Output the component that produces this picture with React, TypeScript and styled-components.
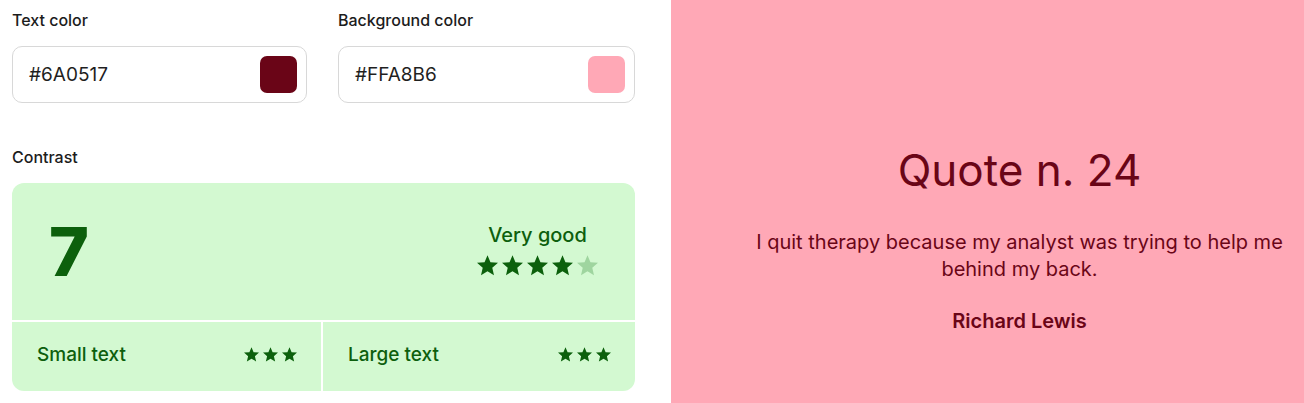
import React from "react";
import styled, { createGlobalStyle } from "styled-components";

const Global = createGlobalStyle`
  html, body { margin: 0; padding: 0; }
  body { font-family: Inter, "Noto Sans", sans-serif; background: #fff; }
`;

const Page = styled.div`
  display: flex;
  width: 1304px;
  height: 403px;
  overflow: hidden;
`;

const Controls = styled.div`
  width: 671px;
  box-sizing: border-box;
  padding: 10px 36px 0 12px;
  display: flex;
  flex-direction: column;
`;

const FieldRow = styled.div`
  display: grid;
  grid-template-columns: 295px 297px;
  column-gap: 31px;
`;

const Field = styled.div`
  display: flex;
  flex-direction: column;
`;

const Label = styled.div`
  font-size: 16px;
  line-height: 20px;
  font-weight: 500;
  color: #1c1c1c;
  margin-bottom: 16px;
`;

const InputBox = styled.div`
  height: 57px;
  box-sizing: border-box;
  border: 1px solid #d8d8d8;
  border-radius: 10px;
  display: flex;
  align-items: center;
  justify-content: space-between;
  padding: 0 9px 0 16px;
  font-size: 19px;
  color: #1f1f1f;
`;

const Swatch = styled.div<{ $c: string }>`
  width: 37px;
  height: 37px;
  border-radius: 7px;
  background: ${(p) => p.$c};
`;

const ContrastSection = styled.div`
  margin-top: 44px;
  display: flex;
  flex-direction: column;
`;

const Card = styled.div`
  display: grid;
  grid-template-columns: 309px 1fr;
  grid-template-rows: 137px 69px;
  gap: 2px;
  border-radius: 12px;
  overflow: hidden;
  color: #0d5f0d;
`;

const Cell = styled.div`
  background: #d3f9d1;
`;

const TopCell = styled(Cell)`
  grid-column: 1 / 3;
  display: flex;
  align-items: center;
  justify-content: space-between;
  padding: 0 37px 0 37px;
`;

const Score = styled.div`
  font-size: 68px;
  line-height: 68px;
  font-weight: 800;
  color: #0c600c;
  margin-top: -1px;
`;

const Verdict = styled.div`
  display: flex;
  flex-direction: column;
  align-items: center;
  gap: 8px;
  margin-top: -4px;
`;

const VerdictText = styled.div`
  font-size: 20px;
  line-height: 24px;
  font-weight: 500;
`;

const Stars = styled.div<{ $gap: number }>`
  display: flex;
  gap: ${(p) => p.$gap}px;
`;

const BottomCell = styled(Cell)`
  display: flex;
  align-items: center;
  justify-content: space-between;
  padding: 0 24px 4px 25px;
  font-size: 19px;
  font-weight: 500;
`;

const Preview = styled.div`
  flex: 1;
  background: #ffa8b6;
  color: #6a0517;
  display: flex;
  flex-direction: column;
  align-items: center;
  text-align: center;
  padding: 143px 16px 0 80px;
`;

const Title = styled.div`
  font-size: 44px;
  line-height: 54px;
  font-weight: 400;
`;

const QuoteText = styled.div`
  margin-top: 32px;
  font-size: 20px;
  line-height: 27px;
`;

const Author = styled.div`
  margin-top: 26px;
  font-size: 20px;
  line-height: 24px;
  font-weight: 600;
`;

const Star = ({ size, on }: { size: number; on: boolean }) => (
  <svg width={size} height={size} viewBox="2 2 20 19.5">
    <path
      fill={on ? "#0c600c" : "#9fd59f"}
      d="M12 17.27L18.18 21l-1.64-7.03L22 9.24l-7.19-.61L12 2 9.19 8.63 2 9.24l5.46 4.73L5.82 21z"
    />
  </svg>
);

const StarRow = ({ n, total, size, gap }: { n: number; total: number; size: number; gap: number }) => (
  <Stars $gap={gap}>
    {Array.from({ length: total }).map((_, i) => (
      <Star key={i} size={size} on={i < n} />
    ))}
  </Stars>
);

export default function App() {
  return (
    <>
      <Global />
      <Page>
        <Controls>
          <FieldRow>
            <Field>
              <Label>Text color</Label>
              <InputBox>
                #6A0517
                <Swatch $c="#6A0517" />
              </InputBox>
            </Field>
            <Field>
              <Label>Background color</Label>
              <InputBox>
                #FFA8B6
                <Swatch $c="#FFA8B6" />
              </InputBox>
            </Field>
          </FieldRow>
          <ContrastSection>
            <Label>Contrast</Label>
            <Card>
              <TopCell>
                <Score>7</Score>
                <Verdict>
                  <VerdictText>Very good</VerdictText>
                  <StarRow n={4} total={5} size={21} gap={4} />
                </Verdict>
              </TopCell>
              <BottomCell>
                Small text
                <StarRow n={3} total={3} size={15} gap={4} />
              </BottomCell>
              <BottomCell>
                Large text
                <StarRow n={3} total={3} size={15} gap={4} />
              </BottomCell>
            </Card>
          </ContrastSection>
        </Controls>
        <Preview>
          <Title>Quote n. 24</Title>
          <QuoteText>
            I quit therapy because my analyst was trying to help me behind my back.
          </QuoteText>
          <Author>Richard Lewis</Author>
        </Preview>
      </Page>
    </>
  );
}
